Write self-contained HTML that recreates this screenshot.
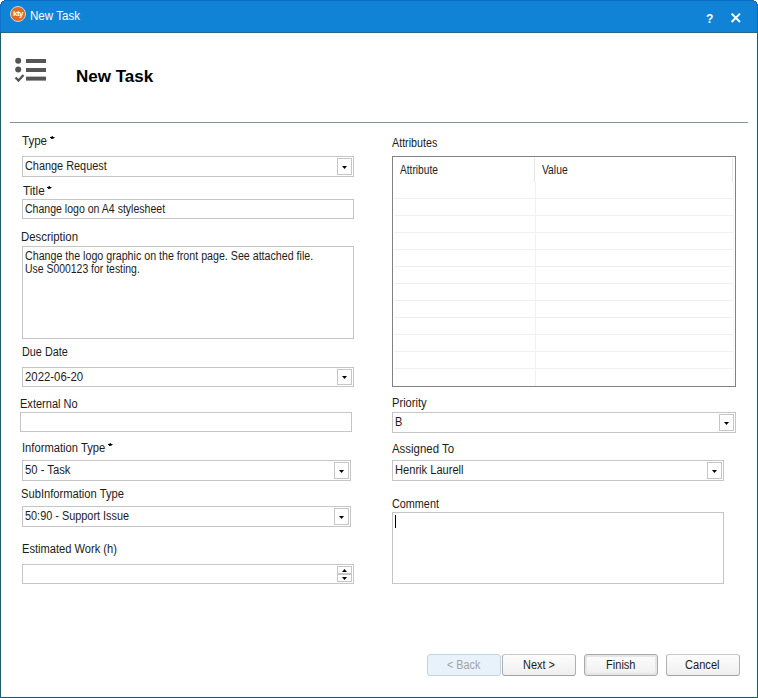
<!DOCTYPE html>
<html><head><meta charset="utf-8">
<style>
*{margin:0;padding:0;box-sizing:border-box}
html,body{width:758px;height:698px;overflow:hidden;background:#fff}
body{position:relative;font-family:"Liberation Sans",sans-serif;font-size:12px;color:#000}
.a{position:absolute}
.t{position:absolute;white-space:nowrap;line-height:13px;font-size:12px;transform-origin:0 0;color:#1c1c1c}
.bx{position:absolute;border:1px solid #c6c6c6;background:#fff}
.db{position:absolute;border:1px solid #c6c6c6;background:#fff}
.ar{position:absolute;width:5px;height:3px;background:#000;clip-path:polygon(0 0,100% 0,50% 100%)}
.arup{position:absolute;width:5px;height:3px;background:#000;clip-path:polygon(50% 0,100% 100%,0 100%)}
.tl{position:absolute;background:#f0f0f0;height:1px}
.btn{position:absolute;top:654px;width:74px;height:22px;border:1px solid;border-color:#c8c8c8 #b0b0b0 #a2a2a2 #b0b0b0;border-radius:3px;background:linear-gradient(#fdfdfd,#efefef)}
</style></head><body>

<!-- title bar -->
<div class="a" style="left:0;top:0;width:758px;height:33px;background:#1083d7"></div>
<div class="a" style="left:0;top:32px;width:758px;height:1px;background:#2a6888"></div>
<div class="a" style="left:0;top:33px;width:758px;height:1px;background:#effdff"></div>
<div class="a" style="left:0;top:32px;width:1px;height:666px;background:#245a70"></div>
<div class="a" style="left:0;top:0;width:1px;height:32px;background:#0e72c8"></div>
<div class="a" style="left:0;top:0;width:758px;height:1px;background:#0b6cc2"></div>
<div class="a" style="left:757px;top:32px;width:1px;height:666px;background:#28596c"></div>
<div class="a" style="left:757px;top:0;width:1px;height:32px;background:#0b6cc2"></div>
<div class="a" style="left:0;top:0;width:4px;height:1px;background:#fff"></div>
<div class="a" style="left:0;top:1px;width:2px;height:1px;background:#fff"></div>
<div class="a" style="left:0;top:2px;width:1px;height:2px;background:#fff"></div>
<div class="a" style="left:2px;top:1px;width:2px;height:1px;background:#1a5f95"></div>
<div class="a" style="left:1px;top:2px;width:1px;height:2px;background:#1a5f95"></div>
<div class="a" style="left:754px;top:0;width:4px;height:1px;background:#fff"></div>
<div class="a" style="left:756px;top:1px;width:2px;height:1px;background:#fff"></div>
<div class="a" style="left:757px;top:2px;width:1px;height:2px;background:#fff"></div>
<div class="a" style="left:754px;top:1px;width:2px;height:1px;background:#1a5f95"></div>
<div class="a" style="left:756px;top:2px;width:1px;height:2px;background:#1a5f95"></div>
<div class="a" style="left:0;top:697px;width:758px;height:1px;background:#245a70"></div>
<div class="a" style="left:10px;top:6px;width:16px;height:16px;border-radius:50%;background:#de6b1e;border:1px solid #cdd6e2"></div>
<div class="t" style="left:13px;top:7px;font-size:8px;font-weight:bold;color:#fff;letter-spacing:-0.5px">kty</div>
<div class="t" style="left:706px;top:13px;font-size:12px;font-weight:bold;color:#fff">?</div>
<svg class="a" style="left:729px;top:11px" width="14" height="14"><path d="M2.6 2.6 L11 11 M11 2.6 L2.6 11" stroke="#fff" stroke-width="2"/></svg>

<div class="a" style="left:1px;top:33px;width:1px;height:664px;background:#effdff"></div>
<div class="a" style="left:756px;top:33px;width:1px;height:664px;background:#effdff"></div>
<div class="a" style="left:1px;top:696px;width:756px;height:1px;background:#effdff"></div>
<div class="a" style="left:0;top:697px;width:1px;height:1px;background:#1f6aa6"></div>
<div class="a" style="left:757px;top:697px;width:1px;height:1px;background:#1f6aa6"></div>
<!-- header -->
<svg class="a" style="left:14px;top:56px" width="34" height="28">
 <circle cx="4.2" cy="4.8" r="3" fill="#555"/>
 <circle cx="4.2" cy="13.5" r="3" fill="#555"/>
 <path d="M1.5 21.5 L4.5 24.5 L9.5 19" stroke="#555" stroke-width="2.4" fill="none"/>
 <rect x="12" y="3" width="20" height="4" fill="#555"/>
 <rect x="12" y="12" width="20" height="4" fill="#555"/>
 <rect x="12" y="20.6" width="20" height="4" fill="#555"/>
</svg>
<div class="t" style="left:76px;top:67px;font-size:17px;line-height:19px;font-weight:bold;color:#000">New Task</div>
<div class="a" style="left:10px;top:122px;width:738px;height:1px;background:#879594"></div>

<!-- left column -->
<div class="bx" style="left:22px;top:156px;width:332px;height:21px"></div>
<div class="db" style="left:337px;top:158px;width:15px;height:17px"></div>
<div class="ar" style="left:342px;top:166px"></div>

<div class="bx" style="left:22px;top:199px;width:332px;height:20px"></div>

<div class="bx" style="left:22px;top:246px;width:332px;height:93px"></div>

<div class="bx" style="left:22px;top:367px;width:332px;height:20px"></div>
<div class="db" style="left:337px;top:369px;width:15px;height:16px"></div>
<div class="ar" style="left:342px;top:376px"></div>

<div class="bx" style="left:20px;top:412px;width:332px;height:20px"></div>

<div class="bx" style="left:22px;top:460px;width:329px;height:21px"></div>
<div class="db" style="left:334px;top:462px;width:15px;height:17px"></div>
<div class="ar" style="left:339px;top:470px"></div>

<div class="bx" style="left:22px;top:506px;width:329px;height:21px"></div>
<div class="db" style="left:334px;top:508px;width:15px;height:17px"></div>
<div class="ar" style="left:339px;top:516px"></div>

<div class="bx" style="left:22px;top:564px;width:332px;height:20px"></div>
<div class="db" style="left:337px;top:566px;width:15px;height:8px"></div>
<div class="db" style="left:337px;top:574px;width:15px;height:8px"></div>
<div class="arup" style="left:342px;top:569px"></div>
<div class="ar" style="left:342px;top:577px"></div>

<!-- right column -->
<div class="a" style="left:392px;top:156px;width:344px;height:231px;border:1px solid #828282;background:#fff"></div>
<div class="a" style="left:534px;top:158px;width:1px;height:24px;background:#e5e5e5"></div>
<div class="a" style="left:732px;top:158px;width:1px;height:24px;background:#e5e5e5"></div>
<div class="tl" style="left:394px;top:198px;width:339px"></div>
<div class="tl" style="left:394px;top:215px;width:339px"></div>
<div class="tl" style="left:394px;top:232px;width:339px"></div>
<div class="tl" style="left:394px;top:249px;width:339px"></div>
<div class="tl" style="left:394px;top:266px;width:339px"></div>
<div class="tl" style="left:394px;top:283px;width:339px"></div>
<div class="tl" style="left:394px;top:300px;width:339px"></div>
<div class="tl" style="left:394px;top:317px;width:339px"></div>
<div class="tl" style="left:394px;top:334px;width:339px"></div>
<div class="tl" style="left:394px;top:351px;width:339px"></div>
<div class="tl" style="left:394px;top:368px;width:339px"></div>
<div class="a" style="left:535px;top:182px;width:1px;height:204px;background:#f0f0f0"></div>
<div class="a" style="left:733px;top:182px;width:1px;height:203px;background:#f5f5f5"></div>

<div class="bx" style="left:392px;top:412px;width:344px;height:21px"></div>
<div class="db" style="left:719px;top:414px;width:15px;height:17px"></div>
<div class="ar" style="left:724px;top:422px"></div>

<div class="bx" style="left:392px;top:460px;width:332px;height:21px"></div>
<div class="db" style="left:707px;top:462px;width:15px;height:17px"></div>
<div class="ar" style="left:712px;top:470px"></div>

<div class="bx" style="left:392px;top:512px;width:332px;height:72px"></div>
<div class="a" style="left:395px;top:515px;width:1px;height:13px;background:#000"></div>

<!-- buttons -->
<div class="btn" style="left:427px;background:#e8f2fb;border-color:#c3d3e2;color:#9a9a9a"></div>
<div class="btn" style="left:502px"></div>
<div class="btn" style="left:584px;box-shadow:inset 0 0 0 2px #e6e6e6;border-color:#a8a8a8"></div>
<div class="btn" style="left:666px"></div>


<svg class="a" style="left:50px;top:136px" width="5" height="4"><rect x="1.5" y="0" width="1.5" height="1" fill="#333"/><rect x="0" y="1" width="4.5" height="1" fill="#000"/><rect x="1" y="2" width="2.5" height="1" fill="#222"/></svg>
<svg class="a" style="left:47px;top:186px" width="5" height="4"><rect x="1.5" y="0" width="1.5" height="1" fill="#333"/><rect x="0" y="1" width="4.5" height="1" fill="#000"/><rect x="1" y="2" width="2.5" height="1" fill="#222"/></svg>
<svg class="a" style="left:108px;top:443px" width="5" height="4"><rect x="1.5" y="0" width="1.5" height="1" fill="#333"/><rect x="0" y="1" width="4.5" height="1" fill="#000"/><rect x="1" y="2" width="2.5" height="1" fill="#222"/></svg>
<div class="t" style="left:22.30px;top:135px;transform:scaleX(0.9615);">Type</div>
<div class="t" style="left:25.30px;top:160px;transform:scaleX(0.9078);">Change Request</div>
<div class="t" style="left:22.50px;top:185px;transform:scaleX(0.9773);">Title</div>
<div class="t" style="left:24.60px;top:203px;transform:scaleX(0.8787);">Change logo on A4 stylesheet</div>
<div class="t" style="left:21.05px;top:231px;transform:scaleX(0.9492);">Description</div>
<div class="t" style="left:25.00px;top:250px;transform:scaleX(0.8889);">Change the logo graphic on the front page. See attached file.</div>
<div class="t" style="left:25.13px;top:263px;transform:scaleX(0.8692);">Use S000123 for testing.</div>
<div class="t" style="left:21.80px;top:346px;transform:scaleX(0.9040);">Due Date</div>
<div class="t" style="left:24.50px;top:371px;transform:scaleX(0.9475);">2022-06-20</div>
<div class="t" style="left:20.08px;top:398px;transform:scaleX(0.9194);">External No</div>
<div class="t" style="left:21.97px;top:442px;transform:scaleX(0.9330);">Information Type</div>
<div class="t" style="left:25.30px;top:464px;transform:scaleX(0.9367);">50 - Task</div>
<div class="t" style="left:21.47px;top:488px;transform:scaleX(0.9312);">SubInformation Type</div>
<div class="t" style="left:25.30px;top:510px;transform:scaleX(0.9070);">50:90 - Support Issue</div>
<div class="t" style="left:21.57px;top:543px;transform:scaleX(0.9267);">Estimated Work (h)</div>
<div class="t" style="left:392.00px;top:137px;transform:scaleX(0.8941);">Attributes</div>
<div class="t" style="left:400.00px;top:164px;transform:scaleX(0.8489);">Attribute</div>
<div class="t" style="left:541.60px;top:164px;transform:scaleX(0.8600);">Value</div>
<div class="t" style="left:391.87px;top:397px;transform:scaleX(0.9278);">Priority</div>
<div class="t" style="left:394.89px;top:416px;transform:scaleX(0.9143);">B</div>
<div class="t" style="left:392.30px;top:443px;transform:scaleX(0.9523);">Assigned To</div>
<div class="t" style="left:394.87px;top:464px;transform:scaleX(0.9260);">Henrik Laurell</div>
<div class="t" style="left:392.30px;top:498px;transform:scaleX(0.9019);">Comment</div>
<div class="t" style="left:447.10px;top:659px;transform:scaleX(0.9000);color:#a3a3a3">&lt; Back</div>
<div class="t" style="left:522.99px;top:659px;transform:scaleX(0.9088);">Next &gt;</div>
<div class="t" style="left:606.08px;top:659px;transform:scaleX(0.9226);">Finish</div>
<div class="t" style="left:685.00px;top:659px;transform:scaleX(0.9243);">Cancel</div>
<div class="t" style="left:29.64px;top:10px;transform:scaleX(0.9647);color:#fff">New Task</div>
</body></html>
